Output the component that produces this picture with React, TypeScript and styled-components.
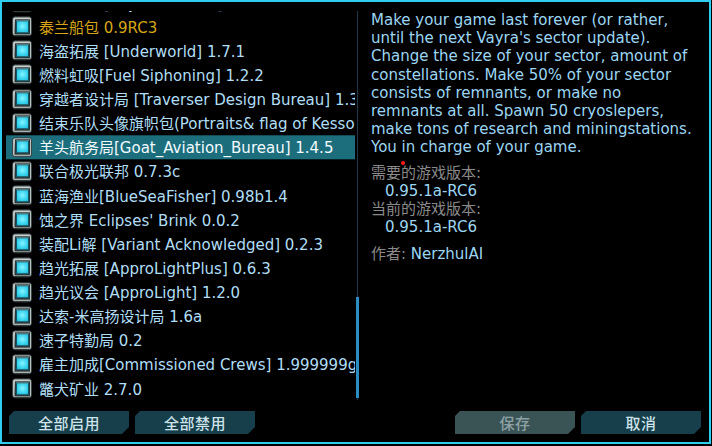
import React from "react";
import styled, { createGlobalStyle } from "styled-components";

const Global = createGlobalStyle`
  html, body { margin: 0; padding: 0; background: #000; }
  body { font-family: "DejaVu Sans", "Noto Sans CJK SC", sans-serif; }
  * { box-sizing: border-box; }
`;

const Window = styled.div`
  position: relative;
  width: 711px;
  height: 444px;
  border: 2px solid #2fcdef;
  background: #000;
  display: flex;
  flex-direction: column;
  overflow: hidden;
`;

const Body = styled.div`
  display: flex;
  align-items: flex-start;
  padding-top: 9px;
  height: 398px;
`;

const ListViewport = styled.div`
  position: relative;
  margin-left: 4px;
  width: 349px;
  height: 389px;
  overflow: hidden;
`;

const ListInner = styled.div<{ $offset: number }>`
  transform: translateY(${(p) => -p.$offset}px);
`;

const Row = styled.div<{ $selected?: boolean }>`
  height: 24.13px;
  display: flex;
  align-items: center;
  gap: 7px;
  padding-left: 6px;
  background: ${(p) => (p.$selected ? "#1d6e7d" : "transparent")};
`;

const Check = styled.div`
  flex: none;
  width: 20px;
  height: 20px;
  border-radius: 3px;
  border: 1px solid #3a4444;
  background: linear-gradient(#d4dada, #8d9696 55%, #6c7474);
  display: flex;
  align-items: center;
  justify-content: center;
  box-shadow: inset 0 0 0 1px #b8c2c2;
`;

const CheckInner = styled.div`
  width: 13px;
  height: 13px;
  border: 1px solid #0d5866;
  background: radial-gradient(circle at 50% 45%, #86f4ff, #3cd6f2 55%, #1eb4d6);
  box-shadow: 0 0 0 1px #2b3434;
`;

const Label = styled.span<{ $tone: "normal" | "gold" | "selected" }>`
  font-size: 15px;
  white-space: nowrap;
  color: ${(p) =>
    p.$tone === "gold" ? "#d5a516" : p.$tone === "selected" ? "#f2fbff" : "#b0def6"};
`;

const ScrollTrack = styled.div`
  width: 4px;
  margin-left: 1px;
  height: 389px;
  background: linear-gradient(
    to right,
    transparent 1px,
    #20384a 1px,
    #20384a 2px,
    transparent 2px
  );
`;

const ScrollThumb = styled.div<{ $top: number; $height: number }>`
  margin-top: ${(p) => p.$top}px;
  width: 3px;
  height: ${(p) => p.$height}px;
  background: #2a8ec3;
`;

const Detail = styled.div`
  margin-left: 11px;
  font-size: 15px;
  line-height: 18.2px;
  color: #9cd6f3;
`;

const Description = styled.p`
  margin: 0;
  white-space: nowrap;
`;

const InfoLabel = styled.div<{ $gap?: number }>`
  margin-top: ${(p) => p.$gap ?? 0}px;
  color: #8a8a8a;
  white-space: nowrap;
`;

const InfoValue = styled.div`
  padding-left: 14px;
  color: #9cd6f3;
`;

const Author = styled.span`
  color: #9cd6f3;
`;

const Footer = styled.div`
  display: flex;
  justify-content: space-between;
  padding: 11px 8px 0 7px;
`;

const ButtonGroup = styled.div`
  display: flex;
  gap: 6px;
`;

const Button = styled.button<{ $disabled?: boolean }>`
  width: 120px;
  height: 23px;
  border: none;
  padding: 0;
  font-family: "Noto Sans CJK SC", sans-serif;
  font-size: 15px;
  font-weight: 500;
  letter-spacing: 0.5px;
  background: ${(p) => (p.$disabled ? "#3a5355" : "#163f4b")};
  color: ${(p) => (p.$disabled ? "#8ea2a6" : "#cfe3ea")};
  clip-path: polygon(5px 0, 100% 0, 100% calc(100% - 7px), calc(100% - 7px) 100%, 0 100%, 0 5px);
  cursor: pointer;
`;

const Cursor = styled.div`
  position: absolute;
  left: 399px;
  top: 159px;
  width: 4px;
  height: 4px;
  border-radius: 50%;
  background: #ff1a1a;
`;

type Mod = { name: string; tone?: "gold" };

const mods: Mod[] = [
  { name: "维拉星域 [Vayra's Sector] 1.1.4" },
  { name: "泰兰船包 0.9RC3", tone: "gold" },
  { name: "海盗拓展 [Underworld] 1.7.1" },
  { name: "燃料虹吸[Fuel Siphoning] 1.2.2" },
  { name: "穿越者设计局 [Traverser Design Bureau] 1.3.0" },
  { name: "结束乐队头像旗帜包(Portraits& flag of Kessoku Band) 1.0" },
  { name: "羊头航务局[Goat_Aviation_Bureau] 1.4.5" },
  { name: "联合极光联邦 0.7.3c" },
  { name: "蓝海渔业[BlueSeaFisher] 0.98b1.4" },
  { name: "蚀之界 Eclipses' Brink 0.0.2" },
  { name: "装配Li解 [Variant Acknowledged] 0.2.3" },
  { name: "趋光拓展 [ApproLightPlus] 0.6.3" },
  { name: "趋光议会 [ApproLight] 1.2.0" },
  { name: "达索-米高扬设计局 1.6a" },
  { name: "速子特勤局 0.2" },
  { name: "雇主加成[Commissioned Crews] 1.999999gg" },
  { name: "鼈犬矿业 2.7.0" },
];

const SELECTED = 6;

export default function App() {
  return (
    <>
      <Global />
      <Window>
        <Body>
          <ListViewport>
            <ListInner $offset={20.7}>
              {mods.map((m, i) => (
                <Row key={i} $selected={i === SELECTED}>
                  <Check>
                    <CheckInner />
                  </Check>
                  <Label $tone={i === SELECTED ? "selected" : m.tone === "gold" ? "gold" : "normal"}>
                    {m.name}
                  </Label>
                </Row>
              ))}
            </ListInner>
          </ListViewport>
          <ScrollTrack>
            <ScrollThumb $top={286} $height={101} />
          </ScrollTrack>
          <Detail>
            <Description>
              Make your game last forever (or rather,
              <br />
              until the next Vayra's sector update).
              <br />
              Change the size of your sector, amount of
              <br />
              constellations. Make 50% of your sector
              <br />
              consists of remnants, or make no
              <br />
              remnants at all. Spawn 50 cryoslepers,
              <br />
              make tons of research and miningstations.
              <br />
              You in charge of your game.
            </Description>
            <InfoLabel $gap={7}>需要的游戏版本:</InfoLabel>
            <InfoValue>0.95.1a-RC6</InfoValue>
            <InfoLabel>当前的游戏版本:</InfoLabel>
            <InfoValue>0.95.1a-RC6</InfoValue>
            <InfoLabel $gap={9}>
              作者: <Author>NerzhulAI</Author>
            </InfoLabel>
          </Detail>
        </Body>
        <Footer>
          <ButtonGroup>
            <Button>全部启用</Button>
            <Button>全部禁用</Button>
          </ButtonGroup>
          <ButtonGroup>
            <Button $disabled>保存</Button>
            <Button>取消</Button>
          </ButtonGroup>
        </Footer>
        <Cursor />
      </Window>
    </>
  );
}
